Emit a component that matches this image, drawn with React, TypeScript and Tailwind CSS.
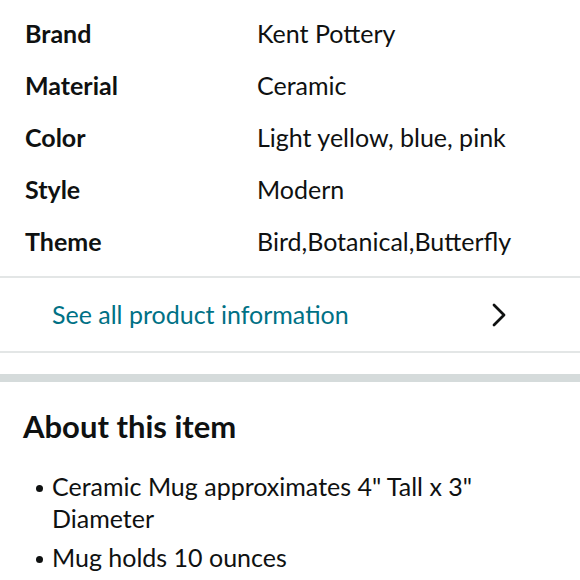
import React from 'react';

const specs = [
  { label: 'Brand', value: 'Kent Pottery' },
  { label: 'Material', value: 'Ceramic' },
  { label: 'Color', value: 'Light yellow, blue, pink' },
  { label: 'Style', value: 'Modern' },
  { label: 'Theme', value: 'Bird,Botanical,Butterfly' },
];

const bullets = ['Ceramic Mug approximates 4" Tall x 3" Diameter', 'Mug holds 10 ounces'];

export default function App() {
  return (
    <div className="w-[580px] h-[580px] overflow-hidden bg-white text-[#0f1111] font-['Lato','Liberation_Sans',sans-serif]">
      {/* product overview table */}
      <div className="pt-[8px] pb-[8px]">
        {specs.map((s) => (
          <div key={s.label} className="flex h-[52px] items-center text-[25px]">
            <div className="w-[257px] pl-[25px] font-bold">{s.label}</div>
            <div>{s.value}</div>
          </div>
        ))}
      </div>
      <div className="border-t-2 border-[#e3e6e6]" />
      <div className="flex h-[73px] items-center justify-between pl-[52px] pr-[74px]">
        <span className="text-[25px] text-[#007185]">See all product information</span>
        <svg width="14" height="24" viewBox="0 0 14 24" fill="none">
          <path d="M2 2 L12 12 L2 22" stroke="#0f1111" strokeWidth="2.8" strokeLinecap="round" strokeLinejoin="round" />
        </svg>
      </div>
      <div className="border-t-2 border-[#e3e6e6]" />
      <div className="h-[21px]" />
      <div className="h-[8px] bg-[#d5dbdb]" />
      {/* about this item */}
      <div className="px-[23px] pt-[25px]">
        <h2 className="text-[31px] font-bold leading-[38px]">About this item</h2>
        <ul className="mt-[25px] pl-[29px] pr-[60px] text-[25px] leading-[32px]">
          {bullets.map((b) => (
            <li key={b} className="relative mb-[7px]">
              <span className="absolute left-[-16px] top-[15px] h-[7px] w-[7px] rounded-full bg-[#0f1111]" />
              {b}
            </li>
          ))}
        </ul>
      </div>
    </div>
  );
}
